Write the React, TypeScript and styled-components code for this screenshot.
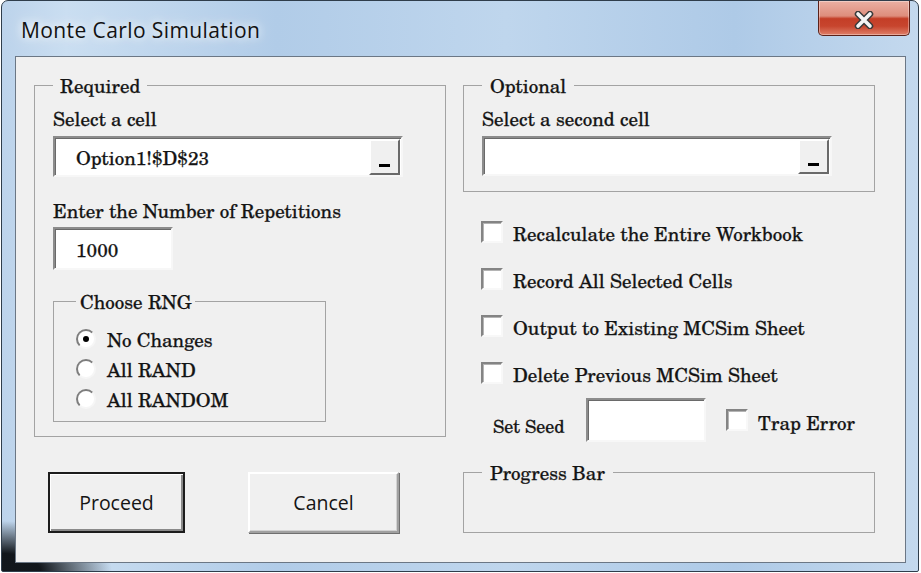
import React from "react";
import styled, { createGlobalStyle, css } from "styled-components";

const SERIF = `"TeX Gyre Schola", "DejaVu Serif", "Liberation Serif", serif`;
const SANS = `"Open Sans", "Noto Sans", sans-serif`;

const GlobalStyle = createGlobalStyle`
  html, body { margin: 0; padding: 0; background: #ffffff; }
  body { width: 921px; height: 573px; overflow: hidden; }
  #root { width: 921px; height: 573px; }
`;

/* dialog body text: the serif face used by every label on the form */
const formText = css`
  font-family: ${SERIF};
  font-size: 19px;
  line-height: 20px;
  color: #141414;
  -webkit-text-stroke: 0.25px #141414;
  white-space: nowrap;
`;

/* ---------- window chrome ---------- */

const Window = styled.div`
  box-sizing: border-box;
  width: 918px;
  height: 572px;
  margin-left: 1px;
  display: flex;
  flex-direction: column;
  border: 1px solid #2f3d4b;
  border-radius: 7px 7px 2px 2px;
  background:
    radial-gradient(110px 50px at 0 100%, rgba(8, 12, 16, 0.95) 35%, rgba(8, 12, 16, 0) 100%),
    linear-gradient(90deg, #bcd3eb 0%, #cadef1 7%, #b1cce8 30%, #bfd6ed 55%, #aecae7 80%, #c4d9ee 100%);
`;

const TitleBar = styled.div`
  flex: none;
  height: 55px;
  display: flex;
  justify-content: space-between;
  align-items: flex-start;
  padding: 0 8px 0 19px;
`;

const Title = styled.span`
  margin-top: 15px;
  font: 21px/28px ${SANS};
  letter-spacing: 0.4px;
  color: #121212;
  text-shadow: 0 0 8px #ffffff, 0 0 16px rgba(255, 255, 255, 0.85);
`;

const CloseButton = styled.div`
  box-sizing: border-box;
  width: 92px;
  height: 35px;
  padding-top: 3px;
  display: flex;
  align-items: center;
  justify-content: center;
  border: 1px solid #5b2119;
  border-top: none;
  border-radius: 0 0 5px 5px;
  background: linear-gradient(#eab0a3 0%, #de8d7c 44%, #c43e27 52%, #c7452e 74%, #df7f68 100%);
  box-shadow: inset 0 0 0 1px rgba(255, 255, 255, 0.35);
`;

const Client = styled.div`
  flex: 1;
  margin: 0 12px 8px 13px;
  border: 1px solid #6b7785;
  background: #f0f0f0;
  display: grid;
  grid-template-columns: 412px 412px;
  column-gap: 17px;
  align-content: start;
  padding: 18px 0 0 18px;
`;

const Column = styled.div`
  display: flex;
  flex-direction: column;
  align-items: flex-start;
`;

/* ---------- group frames ---------- */

const Frame = styled.fieldset<{ $pad: string; $width?: number }>`
  margin: 0;
  min-width: 0;
  box-sizing: border-box;
  width: ${(p) => (p.$width ? `${p.$width}px` : "100%")};
  border: 1px solid #a3a3a3;
  padding: ${(p) => p.$pad};
  display: flex;
  flex-direction: column;
  align-items: flex-start;
`;

const Legend = styled.legend<{ $gap: number }>`
  padding: 0 ${(p) => p.$gap}px;
  ${formText}
`;

const FieldLabel = styled.div<{ $top: number }>`
  margin-top: ${(p) => p.$top}px;
  ${formText}
`;

/* ---------- edit boxes ---------- */

const EditBox = styled.div<{ $w: number; $h: number; $top?: number }>`
  box-sizing: border-box;
  width: ${(p) => p.$w}px;
  height: ${(p) => p.$h}px;
  margin-top: ${(p) => p.$top ?? 0}px;
  flex: none;
  display: flex;
  align-items: center;
  background: #ffffff;
  border: 2px solid;
  border-color: #8c8c8c #f7f7f7 #f7f7f7 #8c8c8c;
  box-shadow: inset 1px 1px 0 #6a6a6a;
`;

const EditText = styled.span`
  flex: 1;
  padding-left: 21px;
  ${formText}
`;

const PickerButton = styled.div`
  box-sizing: border-box;
  width: 31px;
  align-self: stretch;
  margin: 1px 1px 0 0;
  background: #f0f0f0;
  border: 2px solid;
  border-color: #ffffff #6a6a6a #6a6a6a #ffffff;
  display: flex;
  align-items: flex-end;
  justify-content: center;
  padding-bottom: 6px;
`;

const PickerBar = styled.span`
  width: 11px;
  height: 3px;
  background: #000000;
`;

/* ---------- option buttons ---------- */

const RadioList = styled.div`
  display: flex;
  flex-direction: column;
`;

const RadioRow = styled.div`
  height: 30px;
  display: flex;
  align-items: center;
  gap: 11px;
  ${formText}
`;

const RadioMark = styled.span<{ $on: boolean }>`
  box-sizing: border-box;
  width: 20px;
  height: 20px;
  border-radius: 50%;
  background: #ffffff;
  border: 2px solid;
  border-color: #7d7d7d #f6f6f6 #f6f6f6 #7d7d7d;
  display: flex;
  align-items: center;
  justify-content: center;
  &::after {
    content: "";
    width: 6px;
    height: 6px;
    border-radius: 50%;
    background: #000000;
    display: ${(p) => (p.$on ? "block" : "none")};
  }
`;

/* ---------- check boxes ---------- */

const CheckList = styled.div`
  margin-top: 28px;
  padding-left: 18px;
  display: flex;
  flex-direction: column;
  gap: 24px;
`;

const CheckRow = styled.div<{ $left?: number }>`
  display: flex;
  align-items: center;
  gap: 10px;
  margin-left: ${(p) => p.$left ?? 0}px;
  ${formText}
`;

const CheckMark = styled.span`
  box-sizing: border-box;
  flex: none;
  width: 22px;
  height: 22px;
  background: #ffffff;
  border: 2px solid;
  border-color: #848484 #f8f8f8 #f8f8f8 #848484;
  box-shadow: inset 1px 1px 0 #b4b4b4;
`;

const CheckText = styled.span`
  padding-top: 3px;
`;

const SeedRow = styled.div`
  margin-top: 14px;
  padding-left: 30px;
  display: flex;
  align-items: center;
`;

const SeedLabel = styled.span`
  width: 93px;
  margin-top: 12px;
  ${formText}
  font-size: 18px;
`;

/* ---------- command buttons ---------- */

const ButtonRow = styled.div`
  margin-top: 35px;
  padding-left: 14px;
  display: flex;
  gap: 63px;
`;

const CommandButton = styled.div<{ $w: number; $default?: boolean }>`
  box-sizing: border-box;
  width: ${(p) => p.$w}px;
  height: 61px;
  display: flex;
  align-items: center;
  justify-content: center;
  background: #f0f0f0;
  font: 19.5px/26px ${SANS};
  color: #151515;
  border: 2px solid;
  border-color: ${(p) => (p.$default ? "#1c1c1c" : "#ffffff #a0a0a0 #a0a0a0 #ffffff")};
  box-shadow: ${(p) =>
    p.$default
      ? "inset 1px 1px 0 #ffffff, inset -2px -2px 0 #8a8a8a"
      : "inset -1px -1px 0 #d2d2d2, 1px 1px 0 #6f6f6f"};
`;

const CloseGlyph = () => (
  <svg width="22" height="18" viewBox="0 0 22 18">
    <path d="M5 3 L17 15 M17 3 L5 15" stroke="#3a3a3a" strokeWidth="6.5" strokeLinecap="round" fill="none" />
    <path d="M5 3 L17 15 M17 3 L5 15" stroke="#f4f4f4" strokeWidth="3.6" strokeLinecap="round" fill="none" />
  </svg>
);

const rngChoices = [
  { label: "No Changes", on: true },
  { label: "All RAND", on: false },
  { label: "All RANDOM", on: false },
];

const optionChecks = [
  "Recalculate the Entire Workbook",
  "Record All Selected Cells",
  "Output to Existing MCSim Sheet",
  "Delete Previous MCSim Sheet",
];

export default function App() {
  return (
    <>
      <GlobalStyle />
      <Window>
        <TitleBar>
          <Title>Monte Carlo Simulation</Title>
          <CloseButton>
            <CloseGlyph />
          </CloseButton>
        </TitleBar>
        <Client>
          <Column>
            <Frame $pad="0 17px 14px 18px">
              <Legend $gap={7}>Required</Legend>
              <FieldLabel $top={13}>Select a cell</FieldLabel>
              <EditBox $w={350} $h={41} $top={8}>
                <EditText>Option1!$D$23</EditText>
                <PickerButton>
                  <PickerBar />
                </PickerButton>
              </EditBox>
              <FieldLabel $top={23}>Enter the Number of Repetitions</FieldLabel>
              <EditBox $w={120} $h={43} $top={7}>
                <EditText>1000</EditText>
              </EditBox>
              <Frame $pad="13px 0 7px 22px" $width={273} style={{ marginTop: 21 }}>
                <Legend $gap={4}>Choose RNG</Legend>
                <RadioList>
                  {rngChoices.map((c) => (
                    <RadioRow key={c.label}>
                      <RadioMark $on={c.on} />
                      <span>{c.label}</span>
                    </RadioRow>
                  ))}
                </RadioList>
              </Frame>
            </Frame>
            <ButtonRow>
              <CommandButton $w={137} $default>
                Proceed
              </CommandButton>
              <CommandButton $w={151}>Cancel</CommandButton>
            </ButtonRow>
          </Column>
          <Column>
            <Frame $pad="0 17px 15px 18px">
              <Legend $gap={8}>Optional</Legend>
              <FieldLabel $top={13}>Select a second cell</FieldLabel>
              <EditBox $w={350} $h={40} $top={8}>
                <EditText />
                <PickerButton>
                  <PickerBar />
                </PickerButton>
              </EditBox>
            </Frame>
            <CheckList>
              {optionChecks.map((t) => (
                <CheckRow key={t}>
                  <CheckMark />
                  <CheckText>{t}</CheckText>
                </CheckRow>
              ))}
            </CheckList>
            <SeedRow>
              <SeedLabel>Set Seed</SeedLabel>
              <EditBox $w={120} $h={44} />
              <CheckRow $left={20}>
                <CheckMark />
                <CheckText>Trap Error</CheckText>
              </CheckRow>
            </SeedRow>
            <Frame $pad="0 0 50px 18px" style={{ marginTop: 20 }}>
              <Legend $gap={8}>Progress Bar</Legend>
            </Frame>
          </Column>
        </Client>
      </Window>
    </>
  );
}
